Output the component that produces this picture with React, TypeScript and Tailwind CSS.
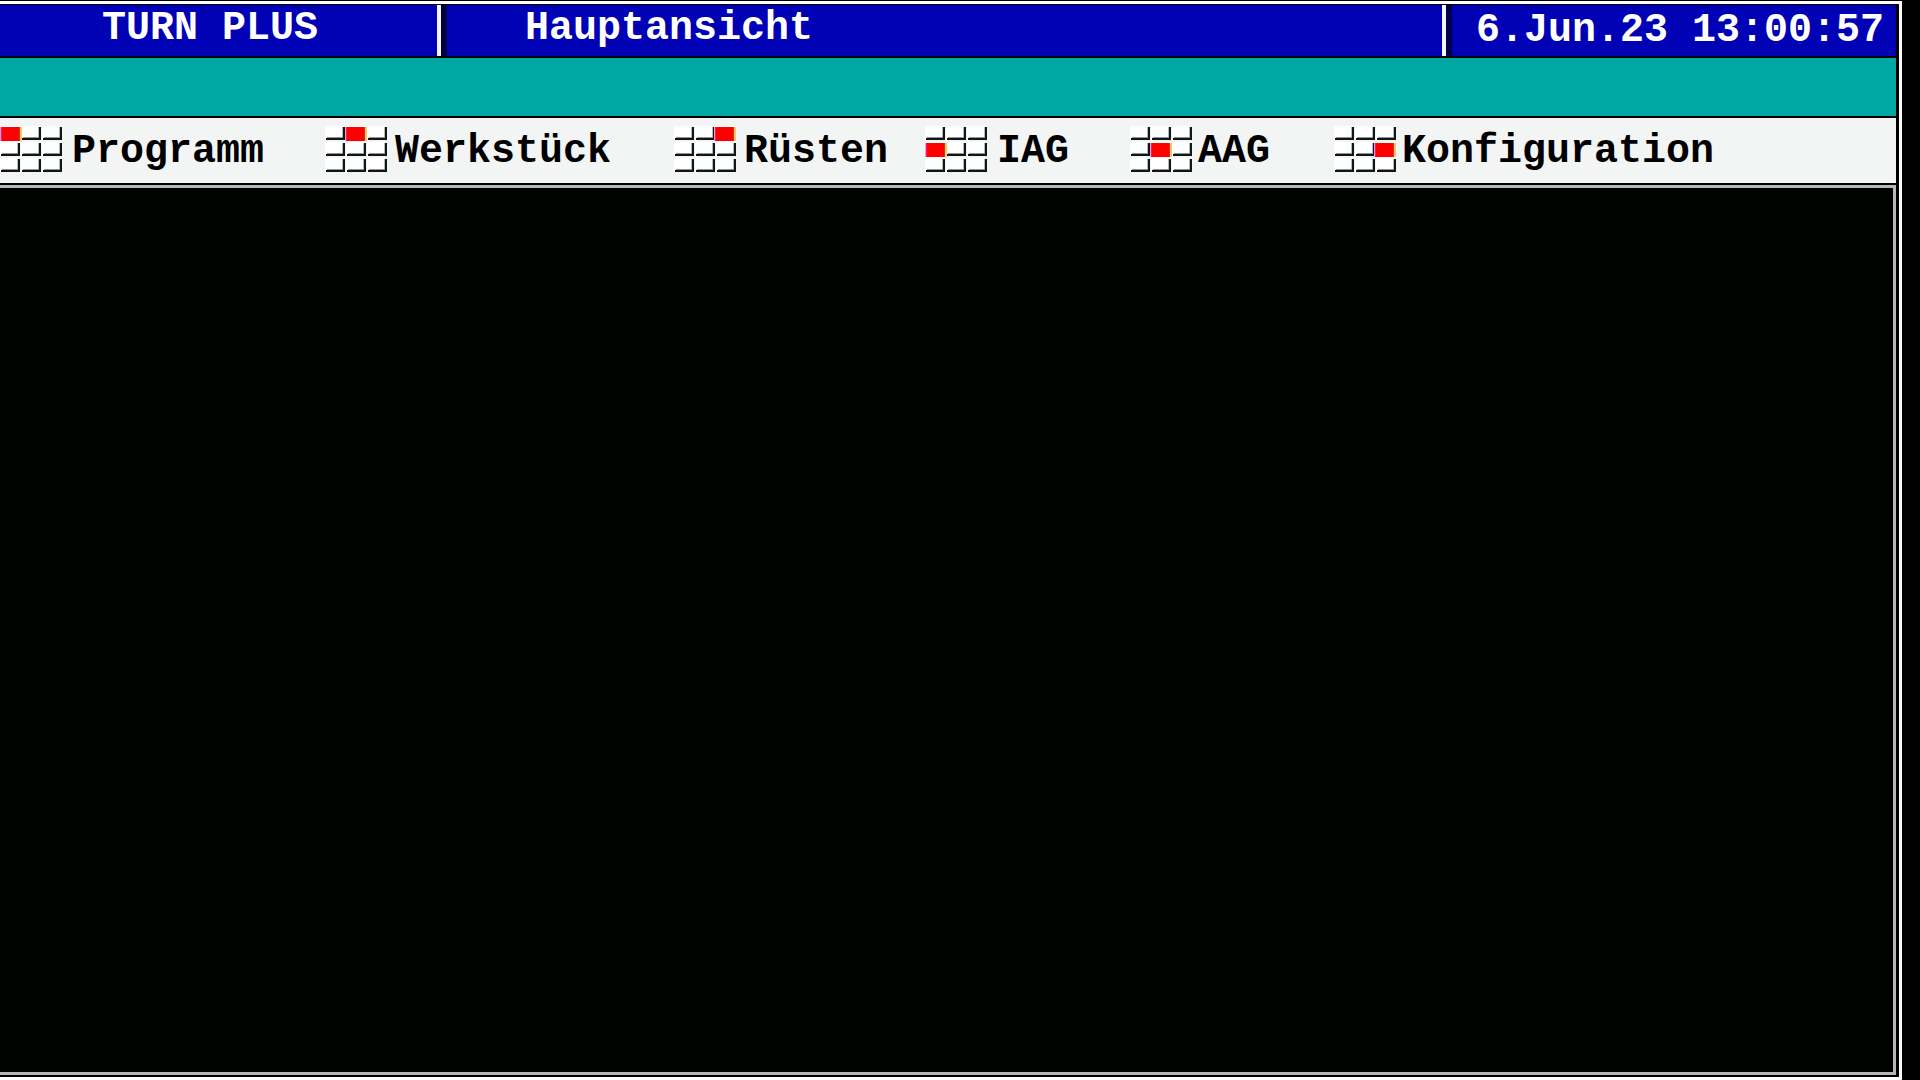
type MenuEntry = { label: string; key: number; gap: string };

const ENTRIES: MenuEntry[] = [
  { label: "Programm", key: 0, gap: "gap-2" },
  { label: "Werkstück", key: 1, gap: "gap-1.5" },
  { label: "Rüsten", key: 2, gap: "gap-1.5" },
  { label: "IAG", key: 3, gap: "gap-2" },
  { label: "AAG", key: 4, gap: "gap-1" },
  { label: "Konfiguration", key: 5, gap: "gap-1" },
];

// Nine raised keys; the active one tells which keypad key opens the menu.
function KeypadIcon({ active }: { active: number }) {
  return (
    <svg className="h-[48px] w-[64px] shrink-0" viewBox="0 0 64 48" aria-hidden="true" shapeRendering="crispEdges">
      {Array.from({ length: 9 }, (_, i) => {
        const x = (i % 3) * 21;
        const y = Math.floor(i / 3) * 16;
        return (
          <g key={i} transform={`translate(${x} ${y})`}>
            <rect width="20" height="14" fill="#ffffff" />
            <rect x="2" y="11" width="18" height="1" fill="#8e9492" />
            <rect x="1" y="12" width="19" height="2" fill="#101615" />
            <rect x="17" y="1" width="1" height="10" fill="#b4bab8" />
            <rect x="18" y="1" width="2" height="12" fill="#101615" />
          </g>
        );
      })}
      <g transform={`translate(${(active % 3) * 20} ${Math.floor(active / 3) * 16})`}>
        <rect x="0" y="1" width="1" height="14" fill="#ff9ac8" />
        <rect x="1" y="1" width="1" height="14" fill="#ff1478" />
        <rect x="2" y="1" width="17" height="14" fill="#ff0000" />
        <rect x="19" y="1" width="1" height="14" fill="#c83c00" />
        <rect x="20" y="1" width="2" height="14" fill="#ffc070" />
      </g>
    </svg>
  );
}

export default function App() {
  return (
    <div className="flex h-screen bg-black pt-px pr-[18px] font-['Liberation_Mono',monospace] text-[40px] leading-10 font-bold">
      <div className="flex flex-1 flex-col border-t-[3px] border-r-[3px] border-b-[3px] border-white bg-black pt-px pr-[3px] pb-0.5">
        <header className="grid h-[51px] grid-cols-[441px_1fr_450px] bg-[#0000b4] text-white">
          <div className="border-r-4 border-[#f4f4ff] pl-[102px]">
            <h1 className="pt-1">TURN PLUS</h1>
          </div>
          <div className="border-r-4 border-l-[6px] border-r-[#f4f4ff] border-l-[#000048] pl-[78px]">
            <h2 className="pt-1">Hauptansicht</h2>
          </div>
          <div className="border-l-[6px] border-[#000048] pt-1.5 pr-3 text-right whitespace-pre">6.Jun.23 13:00:57</div>
        </header>
        <div className="mt-0.5 h-[58px] bg-[#00a8a4]" />
        <nav className="mt-0.5 grid h-[65px] grid-cols-[325fr_349fr_251fr_205fr_204fr_562fr] bg-[#f3f5f4] pt-2 text-black">
          {ENTRIES.map((e) => (
            <button key={e.label} type="button" className={`flex min-w-0 items-start ${e.gap}`}>
              <KeypadIcon active={e.key} />
              <span className="pt-1.5 whitespace-nowrap">{e.label}</span>
            </button>
          ))}
        </nav>
        <main className="mt-0.5 flex-1 border-t-[3px] border-r-[3px] border-b-[3px] border-[#b4b8b6] bg-[#000300]" />
      </div>
    </div>
  );
}
